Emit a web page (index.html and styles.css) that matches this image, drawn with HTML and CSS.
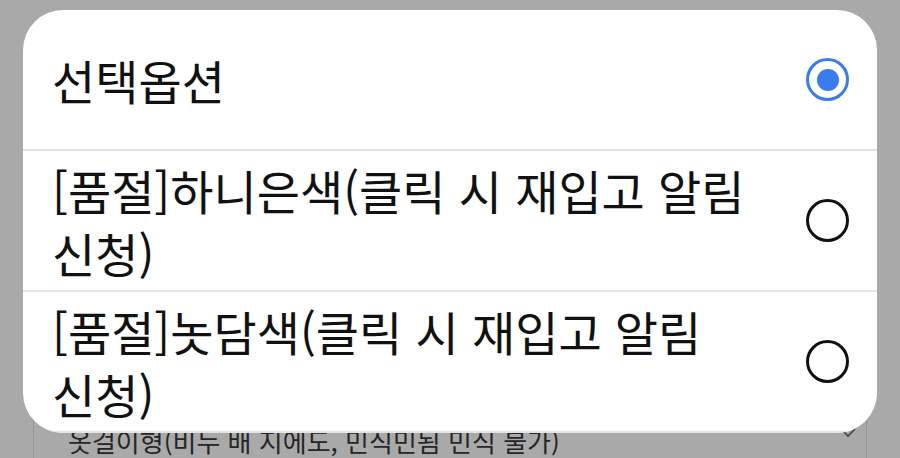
FILE: index.html
```html
<!DOCTYPE html>
<html lang="ko">
<head>
<meta charset="utf-8">
<link rel="stylesheet" href="styles.css">
</head>
<body>
<div class="page">
  <div class="select">
    <span class="select-text">옷걸이형(비누 배 지에도, 민식민됨 민식 불가)</span>
    <svg class="chevron" width="16" height="10" viewBox="0 0 16 10"><polyline points="1,1 8,8 15,1" fill="none" stroke="#444" stroke-width="1.6"/></svg>
  </div>
</div>
<div class="dialog">
  <div class="option">
    <div class="label">선택옵션</div>
    <span class="radio checked"><span class="dot"></span></span>
  </div>
  <div class="option">
    <div class="label">[품절]하니은색(클릭 시 재입고 알림 신청)</div>
    <span class="radio"></span>
  </div>
  <div class="option">
    <div class="label">[품절]놋담색(클릭 시 재입고 알림 신청)</div>
    <span class="radio"></span>
  </div>
</div>
</body>
</html>
```
FILE: styles.css
```css
html, body {
  margin: 0;
  padding: 0;
}
body {
  width: 900px;
  height: 458px;
  overflow: hidden;
  background: #a9a9a9;
  font-family: "Noto Sans CJK KR", "Noto Sans", sans-serif;
  position: relative;
}
.page {
  padding-top: 400px;
  display: flex;
  flex-direction: column;
}
.select {
  margin-left: 33px;
  width: 834px;
  height: 58px;
  box-sizing: border-box;
  border: 1px solid #969696;
  border-bottom: none;
  border-radius: 4px 4px 0 0;
  display: flex;
  align-items: flex-start;
  justify-content: space-between;
  padding: 0 10px 0 34px;
}
.select-text {
  font-size: 26px;
  line-height: 38px;
  margin-top: 21px;
  color: #262626;
}
.chevron {
  margin-top: 27px;
}
.dialog {
  position: absolute;
  top: 10px;
  left: 23px;
  width: 854px;
  height: 423px;
  background: #fff;
  border-radius: 40px;
  overflow: hidden;
}
.option {
  height: 141px;
  box-sizing: border-box;
  display: flex;
  align-items: center;
  justify-content: space-between;
  padding: 0 28px 0 29px;
  border-bottom: 2px solid #e3e3e5;
  flex: none;
}
.label {
  width: 725px;
  font-size: 47px;
  line-height: 63px;
  color: #111;
  word-break: keep-all;
}
.radio {
  width: 43px;
  height: 43px;
  box-sizing: border-box;
  border: 3.5px solid #111;
  border-radius: 50%;
  display: flex;
  align-items: center;
  justify-content: center;
  flex: none;
}
.radio.checked {
  border-color: #3a7bef;
}
.dot {
  width: 22px;
  height: 22px;
  border-radius: 50%;
  background: #3a7bef;
}
```
